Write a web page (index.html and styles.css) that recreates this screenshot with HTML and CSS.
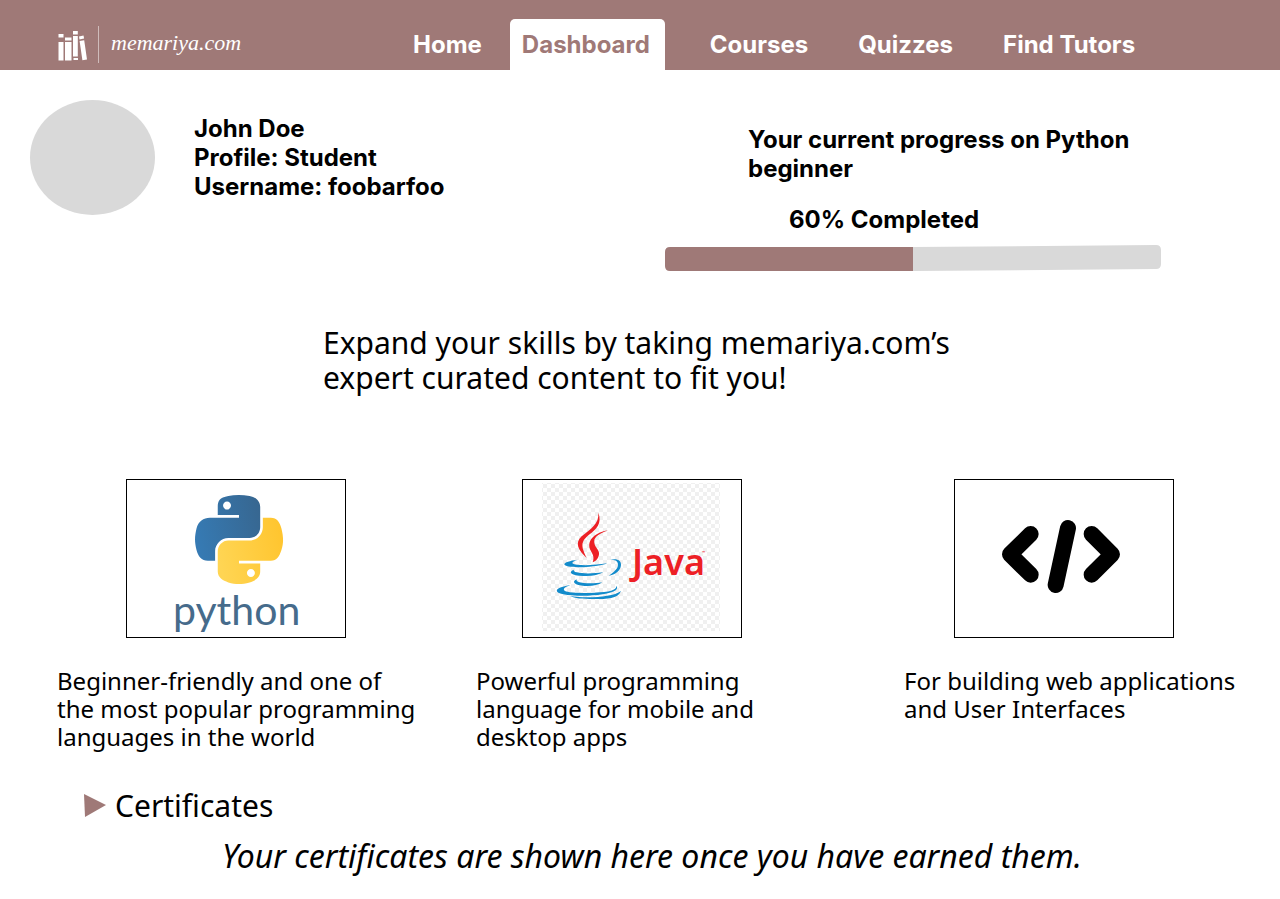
FILE: index.html
```html
<!DOCTYPE html>
<html lang="en">
<head>
<meta charset="utf-8">
<meta name="viewport" content="width=device-width, initial-scale=1">
<title>Dashboard - memariya.com</title>
<link rel="stylesheet" href="styles.css">
</head>
<body>
<header class="site-header">
  <a class="brand" href="#">
    <svg class="brand-mark" viewBox="0 0 30 32" aria-hidden="true">
      <g fill="#fff">
        <path d="M.5 3h5v3.500h-5zM.5 11h5v18.500h-5zM7 6.500h6.500v3H7zM7 11h6.500v18.500H7zM15 0h4.800v3.500H15zM15 5h4.800v20.500H15zM15.500 27h4.500v2h-4.500z"/>
        <path d="M21 5.500l4.500-1 .6 3-4.600 1zM21.600 10l4.600-.8 2.800 19.300-4.600.8z"/>
      </g>
    </svg>
    <span class="brand-name">memariya.com</span>
  </a>
  <nav class="main-nav" aria-label="Main">
    <a href="#">Home</a>
    <a class="active" href="#" aria-current="page">Dashboard</a>
    <a href="#">Courses</a>
    <a href="#">Quizzes</a>
    <a href="#">Find Tutors</a>
  </nav>
</header>
<main>
  <section class="overview">
    <div class="profile">
      <div class="avatar"></div>
      <p class="profile-text">John Doe<br>Profile: Student<br>Username: foobarfoo</p>
    </div>
    <div class="progress">
      <h2 class="progress-title">Your current progress on Python beginner</h2>
      <p class="progress-value">60% Completed</p>
      <svg class="progress-bar" viewBox="0 0 496 26" preserveAspectRatio="none" role="img" aria-label="60% completed">
        <path fill="#d9d9d9" d="M248 2L491 0q5 0 5 5v14q0 5-5 5L248 26z"/>
        <path fill="#9f7977" d="M5 2h243v24H5q-5 0-5-5V7q0-5 5-5z"/>
      </svg>
    </div>
  </section>
  <h1 class="headline">Expand your skills by taking memariya.com’s<br>expert curated content to fit you!</h1>
  <section class="courses">
    <article class="course">
      <a class="course-art" href="#" aria-label="Python">
        <svg viewBox="0 0 218 157">
          <defs>
            <linearGradient id="blue" x1="0" y1="0.500" x2="1" y2="0.300"><stop offset="0" stop-color="#367ab3"/><stop offset="1" stop-color="#376791"/></linearGradient>
            <linearGradient id="gold" x1="0" y1="0.500" x2="1" y2="0.300"><stop offset="0" stop-color="#ffd553"/><stop offset="1" stop-color="#ffc52f"/></linearGradient>
          </defs>
          <g transform="translate(57 13.300) scale(.86)">
            <path fill="url(#blue)" d="M63.391 1.988c-4.222.02-8.252.379-11.8 1.007-10.450 1.846-12.346 5.710-12.346 12.837v9.411h24.693v3.137H29.977c-7.176 0-13.460 4.313-15.426 12.521-2.268 9.405-2.368 15.275 0 25.096 1.755 7.311 5.947 12.519 13.124 12.519h8.491V67.234c0-8.151 7.051-15.340 15.426-15.340h24.665c6.866 0 12.346-5.654 12.346-12.548V15.833c0-6.693-5.646-11.720-12.346-12.837-4.244-.706-8.645-1.027-12.866-1.008zM50.037 9.557c2.550 0 4.634 2.117 4.634 4.721 0 2.593-2.083 4.690-4.634 4.690-2.560 0-4.633-2.097-4.633-4.690-.001-2.604 2.073-4.721 4.633-4.721z"/>
            <path fill="url(#gold)" d="M91.682 28.380v10.966c0 8.500-7.208 15.655-15.426 15.655H51.591c-6.756 0-12.346 5.783-12.346 12.549v23.515c0 6.691 5.818 10.628 12.346 12.547 7.816 2.297 15.312 2.713 24.665 0 6.216-1.801 12.346-5.423 12.346-12.547v-9.412H63.938v-3.138h37.012c7.176 0 9.852-5.005 12.348-12.519 2.578-7.735 2.467-15.174 0-25.096-1.774-7.145-5.161-12.521-12.348-12.521h-9.264zM77.809 87.927c2.561 0 4.634 2.097 4.634 4.692 0 2.602-2.074 4.719-4.634 4.719-2.550 0-4.633-2.117-4.633-4.719 0-2.595 2.083-4.692 4.633-4.692z"/>
          </g>
          <text class="python-word" x="46" y="145">python</text>
        </svg>
      </a>
      <p>Beginner-friendly and one of<br>the most popular programming<br>languages in the world</p>
    </article>
    <article class="course">
      <a class="course-art" href="#" aria-label="Java">
        <svg viewBox="0 0 218 157">
          <defs>
            <pattern id="checks" width="8" height="8" patternUnits="userSpaceOnUse"><path fill="#fff" d="M0 0h8v8H0z"/><path fill="#f0f0f0" d="M0 0h4v4H0zM4 4h4v4H4z"/></pattern>
          </defs>
          <path fill="url(#checks)" d="M19 3h178v148H19z"/>
          <g transform="translate(-8 -10) scale(.3333)">
            <path fill="#ed2025" d="M250 128C262 160 244 178 222 194C192 218 202 234 215 264C190 240 178 220 200 199C226 177 253 162 250 128z"/>
            <path fill="#ed2025" d="M279 181C248 193 233 203 239 223C243 237 258 243 250 261C246 270 240 274 233 277C240 259 231 251 225 238C215 209 242 188 279 181z"/>
            <g fill="#128bcb">
              <path d="M188 269C165 272 148 277 148 283C149 291 180 293 213 291C241 289 266 286 276 280C245 285 210 287 185 284C165 281 170 275 188 269z"/>
              <path d="M176 299C158 306 169 317 205 318C232 319 251 315 265 307C235 311 205 312 185 307C178 305 176 303 176 299z"/>
              <path d="M185 328C168 335 179 346 209 348C233 349 249 346 262 337C239 341 207 341 190 336C185 334 184 331 185 328z"/>
              <path d="M286 270C303 264 319 270 318 285C317 303 300 314 281 317C297 306 309 296 309 284C309 272 300 269 286 270z"/>
              <path d="M166 346C126 350 110 366 145 373C192 382 282 377 302 361C308 356 307 350 304 348C305 361 283 366 239 368C201 370 160 368 150 363C142 358 149 351 166 346z"/>
              <path d="M165 378C205 385 291 384 318 363C308 387 277 387 237 387C203 387 179 385 165 378z"/>
            </g>
          </g>
          <text class="java-word" x="109" y="95">Java</text>
          <text class="java-tm" x="179" y="74">™</text>
        </svg>
      </a>
      <p>Powerful programming<br>language for mobile and<br>desktop apps</p>
    </article>
    <article class="course">
      <a class="course-art" href="#" aria-label="Web development">
        <svg viewBox="0 0 218 157">
          <g transform="translate(-10 -10) scale(.3333)" fill="none" stroke="#000" stroke-width="48" stroke-linecap="round" stroke-linejoin="round">
            <path d="M257 192L195 253L257 314M440 192L501 253L440 314M369 174L332 345"/>
          </g>
        </svg>
      </a>
      <p>For building web applications<br>and User Interfaces</p>
    </article>
  </section>
  <details class="certificates" open>
    <summary><svg class="marker" viewBox="0 0 22 24" aria-hidden="true"><path fill="#9f7977" d="M0 0L22 11L1 23z"/></svg>Certificates</summary>
    <p>Your certificates are shown here once you have earned them.</p>
  </details>
</main>
</body>
</html>
```

FILE: styles.css
```css
* { box-sizing: border-box; }
body { margin: 0; background: #fff; color: #000; font-family: "Noto Sans", sans-serif; font-size: 24px; line-height: 28px; }
h1, h2, p { margin: 0; font-weight: inherit; }
a { color: inherit; text-decoration: none; }
.site-header { display: flex; align-items: flex-end; min-height: 70px; padding-left: 58px; background: #9f7977; color: #fff; }
.brand { display: flex; align-items: center; flex: 0 0 330px; height: 37px; margin-bottom: 7px; }
.brand-mark { width: 30px; height: 32px; margin-top: 5px; }
.brand-name { height: 37px; margin-left: 10px; padding-left: 12px; border-left: 1px solid #cfbcbb; font: italic 22px/34px "Liberation Serif", serif; }
.main-nav { display: flex; align-items: flex-end; font: 700 24px/29px Inter, sans-serif; }
.main-nav a { padding: 11px 25px; white-space: nowrap; }
.main-nav .active { margin: 0 20px 0 3px; padding: 11px 15px 11px 12px; border-radius: 5px 5px 0 0; background: #fff; color: #9f7977; }
.overview { display: grid; grid-template-columns: 635fr 496fr 119fr; padding: 30px 0 0 30px; font: 700 24px/29px Inter, sans-serif; }
.profile { display: flex; align-items: flex-start; gap: 39px; }
.avatar { width: 125px; height: 115px; border-radius: 50%; background: #d9d9d9; }
.profile-text { padding-top: 14px; }
.progress-title { padding: 25px 0 0 83px; font: inherit; }
.progress-value { padding: 22px 0 0 124px; }
.progress-bar { display: block; width: 100%; height: 26px; margin-top: 11px; }
.headline { width: fit-content; min-width: 634px; margin: 54px auto 0; font-size: 30px; line-height: 35px; }
.courses { display: grid; grid-template-columns: 419fr 428fr 376fr; margin-top: 84px; padding-left: 57px; }
.course-art { display: block; width: 220px; border: 1px solid #000; margin-left: 50px; }
.course:first-child .course-art { margin-left: 69px; }
.course:nth-child(2) .course-art { margin-left: 46px; }
.course-art svg { display: block; width: 100%; }
.course p { margin-top: 29px; }
.python-word { font: 41px Lato, sans-serif; fill: #466b8b; }
.java-word { font: 600 36px "Noto Sans", sans-serif; fill: #ed2025; }
.java-tm { font: 4px "Noto Sans", sans-serif; fill: #ed2025; }
.certificates { margin-top: 37px; padding-left: 84px; font-size: 30px; line-height: 36px; }
.certificates summary { display: flex; align-items: center; gap: 9px; list-style: none; }
.marker { width: 22px; height: 24px; }
.certificates p { padding: 14px 0 12px 138px; font-size: 32px; font-style: italic; }
```
